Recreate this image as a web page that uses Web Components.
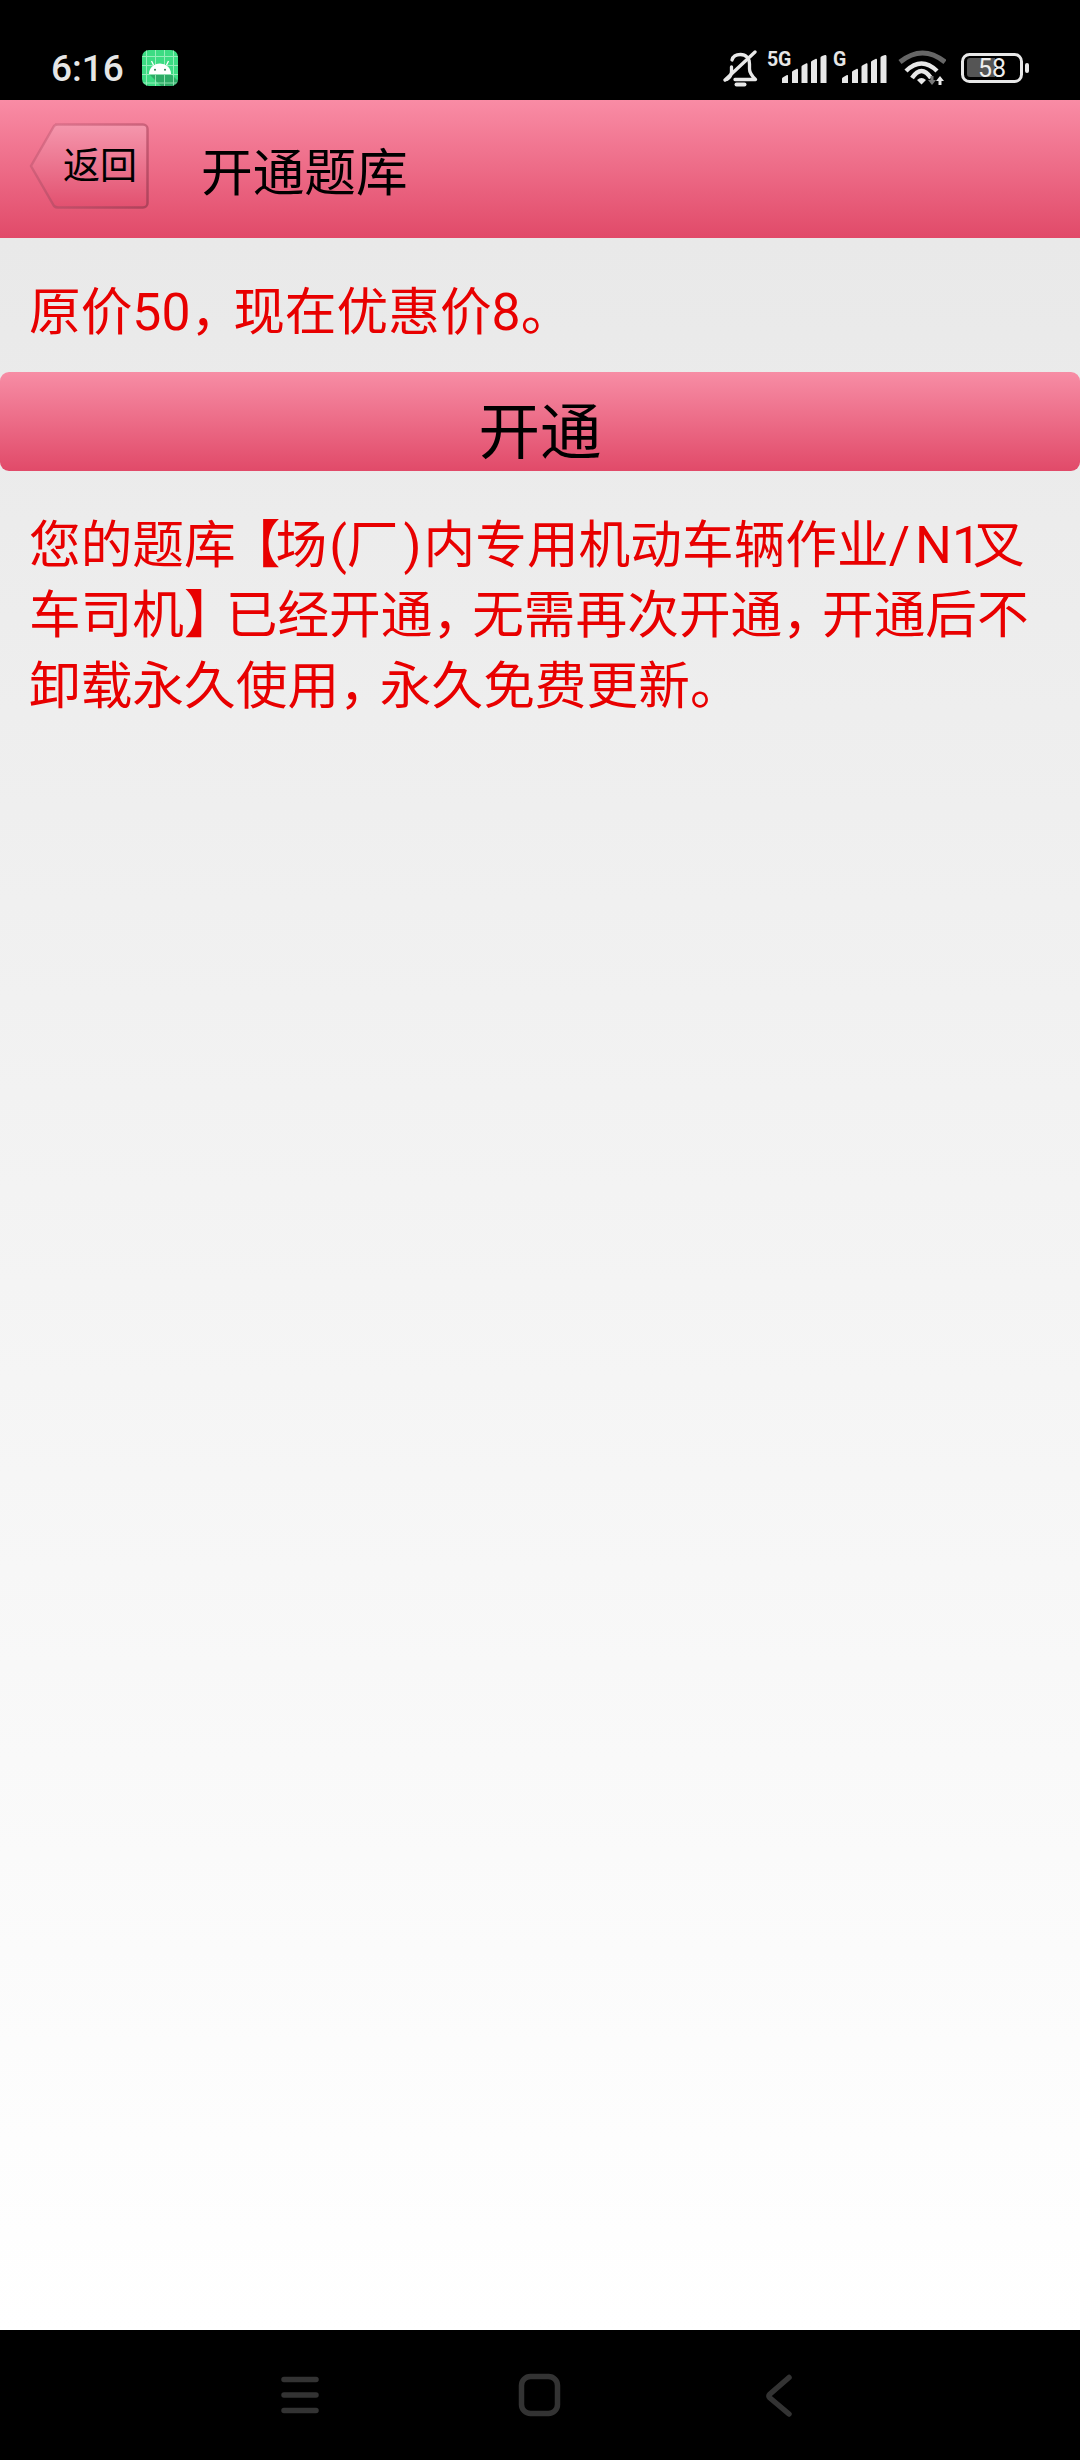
<!DOCTYPE html>
<html lang="zh"><head><meta charset="utf-8"><style>
html,body{margin:0;padding:0}
body{font-family:Roboto,"Noto Sans CJK SC",sans-serif;width:1080px;height:2460px}
</style></head><body>
<app-screen>
  <status-bar slot="status"></status-bar>
  <title-bar slot="header" back="返回">开通题库</title-bar>
  <price-note>原价50<span class="c1">，</span>现在优惠价8。</price-note>
  <gradient-button>开通</gradient-button>
  <price-note variant="info">您的题<span class="k">库</span><span class="lb">【</span>场<span class="lp">(</span>厂<span class="rp">)</span>内专用机动车辆作业<span class="sl">/</span>N<span class="one">1</span>叉<br>车司机<span class="rb">】</span>已经开通<span class="c">，</span>无需再次开通<span class="c">，</span>开通后不<br>卸载永久使用<span class="c3">，</span>永久免费更新。</price-note>
  <nav-bar slot="nav"></nav-bar>
</app-screen>
<script>
function def(name, css, html){
  customElements.define(name, class extends HTMLElement{
    constructor(){super();const s=this.attachShadow({mode:'open'});
      s.innerHTML='<style>'+css+'</style>'+(typeof html==='function'?html(this):html);}
  });
}
def('app-screen',`
:host{display:flex;flex-direction:column;width:1080px;height:2460px;overflow:hidden}
main{flex:1;display:flex;flex-direction:column;background:linear-gradient(#e9e9e9,#fff)}
`,`<slot name="status"></slot><slot name="header"></slot><main><slot></slot></main><slot name="nav"></slot>`);

const bars='M0 24C0 23 .5 22.500 1.500 22L5 20C5.500 19.800 6 20 6 21V28H0ZM10 17.500C10 16.500 10.500 16 11.500 15.500L14.500 14C15.500 13.600 16 14 16 15V28H10ZM19.500 12C19.500 11 20 10.500 21 10L24 8.500C25 8 25.500 8.500 25.500 9.500V28H19.500ZM29 7.500C29 6.500 29.500 6 30.500 5.500L33.500 4C34.500 3.600 35 4 35 5V28H29ZM38.500 3C38.500 2 39 1.500 40 1L43 0C44 -.2 44.500 .5 44.500 1.500V28H38.500Z';

def('status-bar',`
:host{display:flex;align-items:flex-start;height:100px;background:#000;color:#e6e6e6;box-sizing:border-box;padding:0 50px 0 51px;font-family:Roboto,sans-serif}
.time{font-size:37px;font-weight:500;letter-spacing:0;line-height:44px;margin-top:47px;width:91px}
.app{width:36px;height:36px;display:block;margin-top:50px}
.sp{flex:1}
.icons{display:flex;align-items:flex-start;height:100px}
svg{display:block}
.net{position:relative;display:block;height:32px;margin-top:50px}
.net b{position:absolute;left:0;top:0;font-size:19.500px;font-weight:700;line-height:20px;letter-spacing:-.2px}
.net svg{position:absolute;top:5px}
.batt{position:relative;width:70px;height:31px;margin:53px 0 0 14px}
.batt span{position:absolute;left:0;top:0;width:64px;height:30px;line-height:31px;text-align:center;font-size:25px;color:#eee}
`,`<span class="time">6:16</span>
<svg class="app" viewBox="0 0 36 36" aria-hidden="true">
  <defs><clipPath id="c"><rect width="36" height="36" rx="7"/></clipPath></defs>
  <g clip-path="url(#c)">
    <rect width="36" height="36" fill="#3ddc84"/>
    <path d="M7 24H29L36 31V36H19Z" fill="#2a9c5e" opacity=".75"/>
    <path d="M4.500 0V36M13.500 0V36M22.500 0V36M31.500 0V36M0 6.500H36M0 15.500H36M0 24.500H36M0 33H36" stroke="#b9f5d0" stroke-width="1" opacity=".7"/>
    <path d="M7 24a11 10.500 0 0 1 22 0Z" fill="#fff"/>
    <path d="M11.500 15 9.500 11M24.500 15 26.500 11" stroke="#fff" stroke-width="1.300"/>
    <circle cx="13" cy="19.800" r="1" fill="#2a7a52"/><circle cx="23" cy="19.800" r="1" fill="#2a7a52"/>
  </g>
</svg>
<span class="sp"></span>
<div class="icons">
  <svg width="37" height="38" viewBox="0 0 37 38" style="margin-top:50px" fill="none" stroke="#e8e8e8" stroke-width="3.300" stroke-linecap="round" stroke-linejoin="round" aria-hidden="true">
    <path d="M10 10C11 6 15 4.500 18.500 4.500 24 4.500 27.500 8.500 27.500 14V19C27.500 23 30 26 33.500 29.500H13M5 29.500C8 27.500 9.500 25.500 9.500 21V17"/>
    <path d="M3 30 33 2"/>
    <path d="M14.500 34.500H22.500" stroke-width="4"/>
  </svg>
  <div class="net" style="width:60px;margin-left:8px"><b>5G</b>
    <svg width="45" height="28" viewBox="0 0 45 28" style="left:15px" fill="#e8e8e8" aria-hidden="true"><path d="${bars}"/></svg>
  </div>
  <div class="net" style="width:54px;margin-left:6px"><b>G</b>
    <svg width="45" height="28" viewBox="0 0 45 28" style="left:9px" fill="#e8e8e8" aria-hidden="true"><path d="${bars}"/></svg>
  </div>
  <svg width="48" height="36" viewBox="0 0 48 36" style="margin:50px 0 0 11px" fill="none" aria-hidden="true">
    <path d="M2 12Q24.500 -6 47 12" stroke="#666" stroke-width="5"/>
    <path d="M8 21Q23.500 6 39 21" stroke="#e8e8e8" stroke-width="4.500"/>
    <path d="M14 28Q23.500 14 33 28" stroke="#e8e8e8" stroke-width="4.500"/>
    <path d="M19 30Q23.500 26 28 30L23.500 34.500Z" fill="#e8e8e8"/>
    <path d="M42 26 46 31H43.500V35H40.500V31H38Z" fill="#e8e8e8"/>
    <path d="M34 35 30 30H32.500V26H35.500V30H38Z" fill="#777"/>
  </svg>
  <div class="batt">
    <svg width="70" height="31" viewBox="0 0 70 31" aria-hidden="true">
      <rect x="2.500" y="1.500" width="59" height="27" rx="7" fill="none" stroke="#e8e8e8" stroke-width="3"/>
      <path d="M10 5H35V24H10A3 3 0 0 1 7 21V8A3 3 0 0 1 10 5Z" fill="#555"/>
      <rect x="65" y="10" width="4" height="10" rx="2" fill="#e8e8e8"/>
    </svg>
    <span>58</span>
  </div>
</div>`);

def('title-bar',`
:host{display:flex;align-items:center;height:138px;background:linear-gradient(#f98ca5,#e14a69);color:#000;font-family:"Noto Sans CJK SC",sans-serif;box-sizing:border-box}
.back{position:relative;display:flex;align-items:center;justify-content:flex-end;width:120px;height:86px;margin:0 0 6px 29px;padding-right:12px;box-sizing:border-box;font-size:37px;line-height:1}
.back svg{position:absolute;inset:0}
.back span{position:relative;top:-3px}
h1{margin:0 0 0 52px;font-weight:400;font-size:51.700px;line-height:1}
`,(el)=>`<div class="back"><svg width="120" height="86" viewBox="0 0 120 86" aria-hidden="true">
<defs><linearGradient id="g" x1="0" y1="0" x2="0" y2="1"><stop offset="0" stop-color="#f597ad"/><stop offset="1" stop-color="#e2506f"/></linearGradient>
<linearGradient id="s" x1="0" y1="0" x2="1" y2="1"><stop offset="0" stop-color="#c9607a" stop-opacity=".5"/><stop offset="1" stop-color="#a94058" stop-opacity=".9"/></linearGradient></defs>
<path d="M26 1.500H114A4.500 4.500 0 0 1 118.500 6V80A4.500 4.500 0 0 1 114 84.500H29C27 84.500 26 84 25 83L2 43 25 3C26 2 26 1.500 29 1.500Z" fill="url(#g)" stroke="url(#s)" stroke-width="2.500"/></svg><span>${el.getAttribute('back')}</span></div><h1><slot></slot></h1>`);

def('price-note',`
:host{display:block;box-sizing:border-box;color:#e80000;font-family:Roboto,"Noto Sans CJK SC",sans-serif;font-size:51.700px;line-height:70.500px;padding:39.500px 10px 24px 29px}
:host([variant=info]){padding:39.500px 10px 0 29px}
::slotted(.c){letter-spacing:-12px}
::slotted(.c1){letter-spacing:-9px}
::slotted(.c3){letter-spacing:-11px}
::slotted(.k){letter-spacing:-7px}
::slotted(.lb){letter-spacing:-5px}
::slotted(.rb){letter-spacing:-10px}
::slotted(.lp){margin-left:2px}
::slotted(.rp){margin:0 2px 0 5px}
::slotted(.sl){letter-spacing:5px}
::slotted(.one){letter-spacing:-8px}
`,`<slot></slot>`);

def('gradient-button',`
:host{display:flex;align-items:center;justify-content:center;height:99px;box-sizing:border-box;padding-top:12px;border-radius:9px;background:linear-gradient(#f78da5,#e14a69);color:#000;font-family:"Noto Sans CJK SC",sans-serif;font-size:61.500px;line-height:1}
`,`<slot></slot>`);

def('nav-bar',`
:host{display:block;position:relative;height:130px;background:#000}
svg{display:block}
`,`<svg width="1080" height="130" viewBox="0 0 1080 130" fill="none" stroke="#333" stroke-width="5.500" stroke-linecap="round" stroke-linejoin="round" aria-hidden="true">
<path d="M284 49.500H316M284 65H316M284 80.500H316"/>
<rect x="521.500" y="46.500" width="36" height="37" rx="9"/>
<path d="M789 47.500 770 64C768.500 65.500 768.500 66.500 770 68L789 84"/>
</svg>`);
</script>
</body></html>
